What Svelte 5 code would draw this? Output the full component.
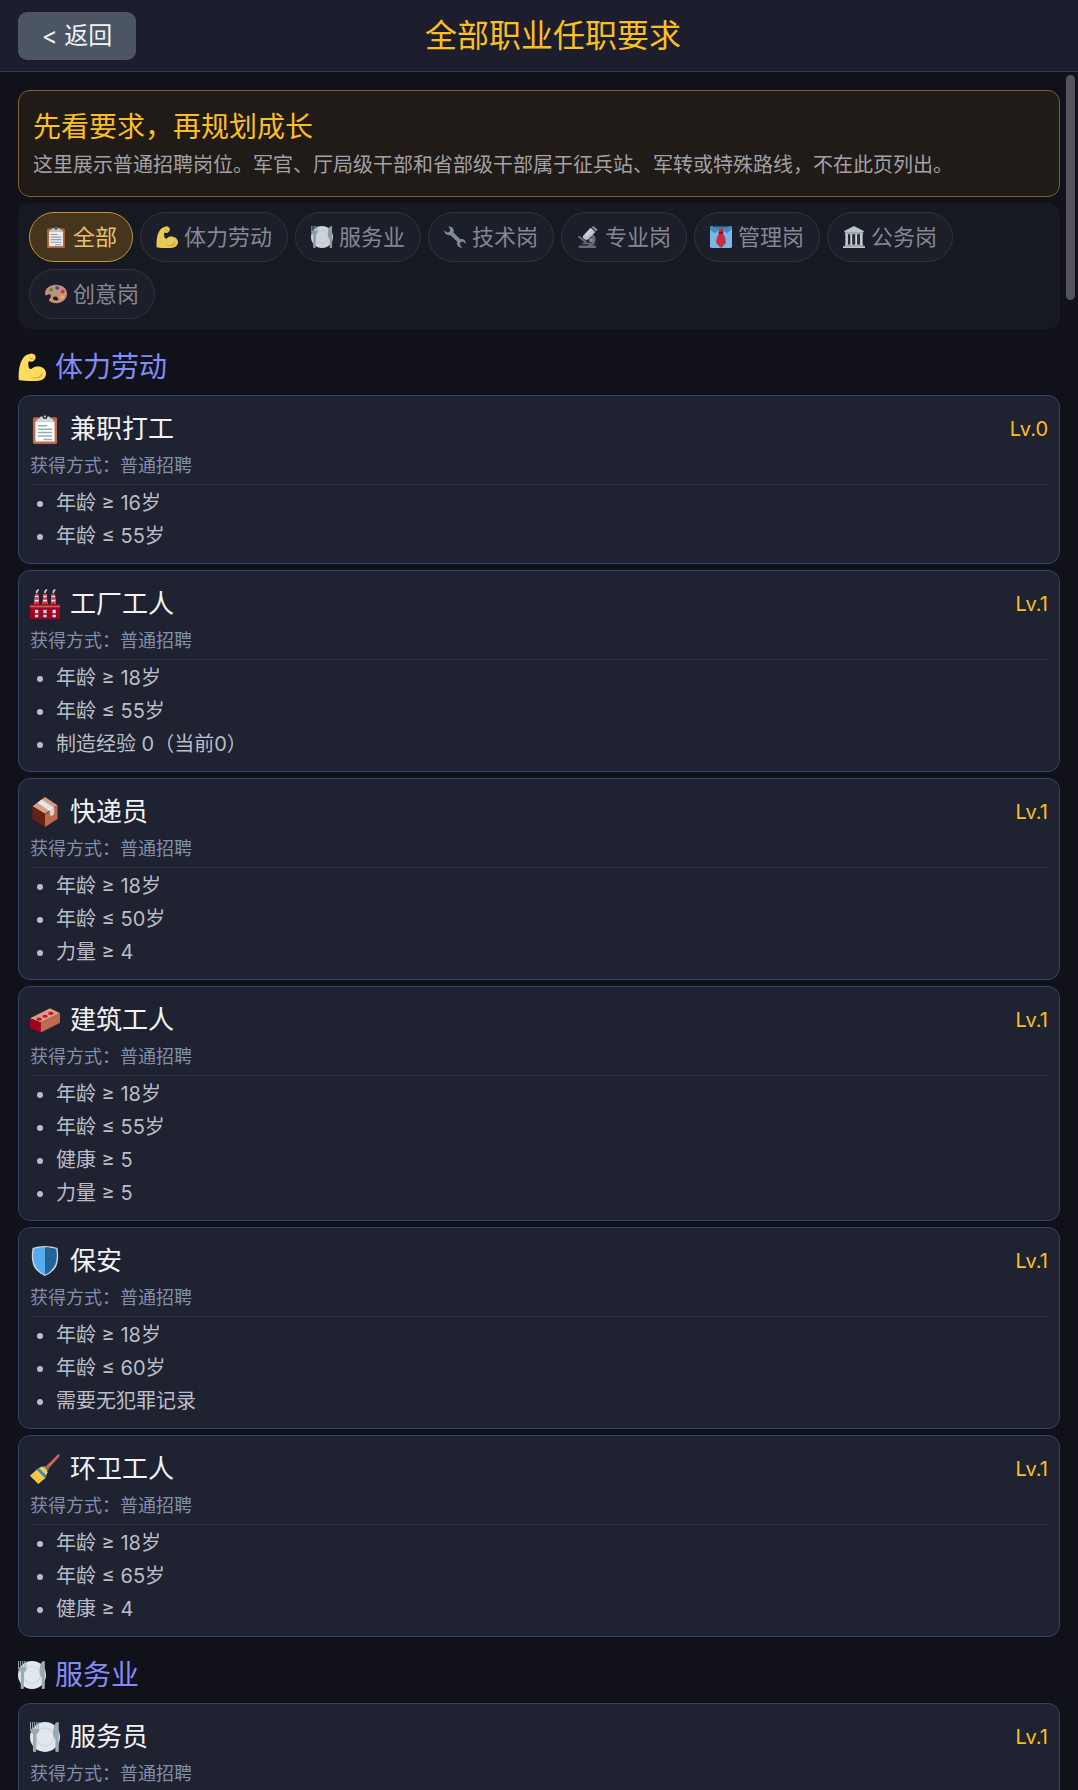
<script>
	const categories = [
		{ id: 'all', icon: 'clipboard', name: '全部' },
		{ id: 'labor', icon: 'biceps', name: '体力劳动' },
		{ id: 'service', icon: 'plate', name: '服务业' },
		{ id: 'tech', icon: 'wrench', name: '技术岗' },
		{ id: 'expert', icon: 'microscope', name: '专业岗' },
		{ id: 'manage', icon: 'tie', name: '管理岗' },
		{ id: 'civil', icon: 'bank', name: '公务岗' },
		{ id: 'creative', icon: 'palette', name: '创意岗' }
	]

	const jobs = [
		{ type: 'labor', icon: 'clipboard', name: '兼职打工', level: 0, needs: ['年龄 ≥ 16岁', '年龄 ≤ 55岁'] },
		{ type: 'labor', icon: 'factory', name: '工厂工人', level: 1, needs: ['年龄 ≥ 18岁', '年龄 ≤ 55岁', '制造经验 0（当前0）'] },
		{ type: 'labor', icon: 'package', name: '快递员', level: 1, needs: ['年龄 ≥ 18岁', '年龄 ≤ 50岁', '力量 ≥ 4'] },
		{ type: 'labor', icon: 'brick', name: '建筑工人', level: 1, needs: ['年龄 ≥ 18岁', '年龄 ≤ 55岁', '健康 ≥ 5', '力量 ≥ 5'] },
		{ type: 'labor', icon: 'shield', name: '保安', level: 1, needs: ['年龄 ≥ 18岁', '年龄 ≤ 60岁', '需要无犯罪记录'] },
		{ type: 'labor', icon: 'broom', name: '环卫工人', level: 1, needs: ['年龄 ≥ 18岁', '年龄 ≤ 65岁', '健康 ≥ 4'] },
		{ type: 'service', icon: 'plate', name: '服务员', level: 1, needs: [] }
	]

	let active = $state('all')

	let sections = $derived(
		categories
			.filter(c => active === 'all' || c.id === active)
			.map(c => ({ ...c, jobs: jobs.filter(j => j.type === c.id) }))
			.filter(c => c.jobs.length)
	)
</script>

{#snippet icon(name)}
	<svg class="icon" viewBox="0 0 36 36" aria-hidden="true"><use href="#i-{name}" /></svg>
{/snippet}

<svg class="sprite" aria-hidden="true">
	<symbol id="i-clipboard" viewBox="0 0 36 36">
		<rect x="3.500" y="4" width="29" height="32" rx="2" fill="#c1694f" />
		<path fill="#fff" d="M6.500 9h23v24h-23z" />
		<path fill="#ccd6dd" d="M13 3h10c1 0 1 3 3 3 1.500 0 2 1 2 2v2H8V8c0-1 .5-2 2-2 2 0 2-3 3-3z" />
		<circle cx="18" cy="3" r="3" fill="#292f33" />
		<circle cx="18" cy="3" r="1.200" fill="#ccd6dd" />
		<path stroke="#99aab5" stroke-width="1.800" stroke-linecap="round" d="M10 14h10M10 18.200h16M10 22.300h16M10 26.500h16M17 30.700h9" />
	</symbol>
	<symbol id="i-biceps" viewBox="0 0 36 36">
		<path fill="#ffdc5d" d="M15.500 1.200c1.200-1 3.500-.8 4.800.4 1.600.4 2.200 1.700 1.900 3 .7 1 .6 2.300-.2 3.200-.8 2-2.600 3.700-4.800 3.600-1.500-.1-2.500-.7-3.400-.8-.8 2.300-.7 5 .2 8.300 1.800 2.200 3 2.200 4.500.8 2.700-2.500 6.700-3 10.500-1.900C33.500 19 36 22.500 36 26.200c0 5.500-4.200 9.400-12 9.700-8.500.3-16.500-.1-23-1.300-.7-10 .5-20.300 4.800-27 2.200-3.500 5.300-6 9.700-6.400z" />
		<path fill="#ef9645" d="M16 29.800c4 2.700 11.500 3 14.200-3.600.8-1 1.900-.3 1.500.8-2.700 6.700-11.300 7.500-15.700 2.800zM14.600 4.500c1.500 2 2.500 2.300 4.600 1.500l-.3 2.300c-2.500.5-4.500-1-4.300-3.800z" />
	</symbol>
	<symbol id="i-plate" viewBox="0 0 36 36">
		<circle cx="18" cy="18" r="18" fill="#e1e8ed" />
		<circle cx="18" cy="18" r="11" fill="#e1e8ed" stroke="#ccd6dd" stroke-width="1.300" />
		<path fill="#99aab5" d="M0 0h1.200v8h1.300V0h1.200v8H5V0h1.200v8h1.300V0h1.300v8H10V0h1v9c0 3-1.500 4.500-3.200 5.200L7.500 35c0 1.300-4 1.300-4 0l.2-20.800C1.500 13.300 0 11 0 8z" />
		<path fill="#99aab5" d="M34.500 1v34c0 1.300-4 1.300-4 0V20.500c-2-1-2.800-3-2.800-6C27.700 7 29.500 0 33.500 0c.7 0 1 .4 1 1z" />
	</symbol>
	<symbol id="i-wrench" viewBox="0 0 36 36">
		<path fill="#8899a6" d="M7.500 1c5-.8 9 3 8.500 8l-.2 2 11 10.500c5-1 9.200 2.700 9.200 7.500l-5-3.500-4 1-1.200 4.200 4 4.800c-5 .7-8.800-3-8.600-7.500l.2-2.500L10.500 15C5 16.200.5 12.500 0 7.500l5.200 3.300 3.800-1 1.200-4.200z" />
	</symbol>
	<symbol id="i-microscope" viewBox="0 0 36 36">
		<path fill="#66757f" d="M3 32h28v4H3zM9 27h13v3H9zM1 18l3-2 12 9-2 3z" />
		<path fill="#66757f" d="M23 12c7 3 10 10 5 18l-4 3h-6l1-3c7-2 8-9 3-13z" />
		<circle cx="23" cy="23" r="3.500" fill="#8899a6" />
		<path fill="#ccd6dd" d="m10 16 12-13 8 7-12 12c-4 2-10-2-8-6z" />
		<path fill="#8899a6" d="m24 2 3-2 7 6-3 3z" />
		<path fill="#e1e8ed" d="m14 14 9-10 3 2-10 11z" />
	</symbol>
	<symbol id="i-tie" viewBox="0 0 36 36">
		<rect width="36" height="36" rx="3" fill="#88c9f9" />
		<path fill="#4598d0" d="M3 0h30c2 0 3 1 3 3v2l-8 7-10-8L8 12 0 6V3c0-2 1-3 3-3z" />
		<path fill="#1c5f8d" d="M5 0h26v2H5z" />
		<path fill="#dd2e44" d="M15 4h6l1 5-1 3c4 6 5 11 5 16l-8 8-8-8c0-5 1-10 5-16l-1-3z" />
		<path fill="#a0041e" d="m14 10 8-1-1 4h-6z" />
	</symbol>
	<symbol id="i-bank" viewBox="0 0 36 36">
		<path fill="#ccd6dd" d="M18 0 34 8v2H2V8z" />
		<path fill="#aab8c2" d="M3 10h30v4H3zM3 30h30v3H3z" />
		<path fill="#ccd6dd" d="M0 33h36v3H0z" />
		<path fill="#292f33" d="M6 14h24v16H6z" />
		<path fill="#e1e8ed" d="M4 13h4v18H4zM12 13h3v18h-3zM20 13h3v18h-3zM28 13h4v18h-4z" />
	</symbol>
	<symbol id="i-palette" viewBox="0 0 36 36">
		<path fill="#d99e82" fill-rule="evenodd" d="M18 3c10 0 18 6 18 14.500S28 33 18.500 33c-5 0-9-1.500-12-4 0-3 4-5 3-9-1-2-3-2-4.500-1-2 1.500-5 2-5-2C0 9 8 3 18 3zm-1 19c-3 0-4 1.500-4 3.500s3 3.500 6 3c3-.4 3-2 2-4-.8-1.600-2-2.500-4-2.500z" />
		<circle cx="10" cy="11" r="3" fill="#5c913b" />
		<circle cx="20" cy="8" r="3.200" fill="#226699" />
		<circle cx="29" cy="14" r="3" fill="#dd2e44" />
		<circle cx="28" cy="23" r="3" fill="#ffcc4d" />
	</symbol>
	<symbol id="i-factory" viewBox="0 0 36 36">
		<path fill="#e1e8ed" d="M6 6h4l1 13H5zM16 6h4l1 13h-6zM26 6h4l1 13h-6z" />
		<path fill="#dd2e44" d="M6 6h4v2H6zM5.600 10h4.700v3H5.500zM5.300 15h5.500v4H5zM16 6h4v2h-4zM15.600 10h4.700v3h-4.800zM15.300 15h5.500v4H15zM26 6h4v2h-4zM25.600 10h4.700v3h-4.800zM25.300 15h5.500v4H25z" />
		<path fill="#ccd6dd" d="M7 4c0-2 1-3 3-4 1 1 1 3-1 3v2H7zM17 4c0-2 1-3 3-4 1 1 1 3-1 3v2h-2zM27 4c0-2 1-3 3-4 1 1 1 3-1 3v2h-2z" />
		<rect y="18" width="36" height="18" rx="1" fill="#a0041e" />
		<path fill="#c1694f" d="M0 20h36v2H0z" />
		<path fill="#bbddf5" d="M6 25h4v4H6zM16 25h4v4h-4zM27 25h4v4h-4zM6 31h4v3H6zM16 31h4v3h-4zM27 31h4v3h-4z" />
	</symbol>
	<symbol id="i-package" viewBox="0 0 36 36">
		<path fill="#d99e82" d="M18 0 33 10 18 20 3 11z" />
		<path fill="#662113" d="m3 11 15 10v15L4 27c-1-.7-1-1-1-2z" />
		<path fill="#c1694f" d="m33 10-15 11v15l14-9c1-.7 1-1 1-2z" />
		<path fill="#e1e8ed" d="m9 7 5-4 15 10-5 4z" />
		<path fill="#ccd6dd" d="m24 17 5-4v7l-3 3-2-1z" />
	</symbol>
	<symbol id="i-brick" viewBox="0 0 36 36">
		<path fill="#d99e82" d="M24 4 36 10 13 21 0 16z" />
		<path fill="#a0041e" d="m0 16 13 5v12L1 28c-1-.5-1-1-1-2z" />
		<path fill="#c1694f" d="m13 21 23-11v10c0 1 0 1-1 2L13 33z" />
		<ellipse cx="11" cy="17" rx="3.300" ry="1.900" fill="#be1931" />
		<ellipse cx="18" cy="13.500" rx="3.300" ry="1.900" fill="#be1931" />
		<ellipse cx="25" cy="10" rx="3.300" ry="1.900" fill="#be1931" />
	</symbol>
	<symbol id="i-shield" viewBox="0 0 36 36">
		<path fill="#ccd6dd" d="M18 0c5 0 11 1 15 2.500 1 6.500 1.500 13.500-1 20.500-2.500 6-8 10.500-14 13C12 33.500 6.500 29 4 23 1.500 16 2 9 3 2.500 7 1 13 0 18 0z" />
		<path fill="#55acee" d="M18 1.500c-5 0-9.500.7-13.500 2-1 6-1 12.500 1 18.500 2.500 5.800 7 10 12.500 12.500z" />
		<path fill="#226699" d="M18 1.500c5 0 9.500.7 13.500 2 1 6 1 12.500-1 18.500-2.500 5.800-7 10-12.500 12.500z" />
	</symbol>
	<symbol id="i-broom" viewBox="0 0 36 36">
		<path fill="#c1694f" d="m34 0 2 2-15 17-3-3z" />
		<path fill="#66757f" d="m18 14 5 4-3 4-6-6z" />
		<path fill="#ffcc4d" d="m9 18 5-3c4 1 6 3 7 7l-3 7-8 7L0 26z" />
		<path fill="#3b88c3" d="m8 19 3-2 9 9-2 3z" />
		<path stroke="#f4900c" d="m3 27 4-4M6 30l4-4M9 33l4-4" />
	</symbol>
</svg>

<div class="page">
	<header class="header">
		<button class="back" type="button">&lt; 返回</button>
		<h1>全部职业任职要求</h1>
		<span class="spacer"></span>
	</header>

	<main class="content">
		<section class="notice">
			<h2>先看要求，再规划成长</h2>
			<p>这里展示普通招聘岗位。军官、厅局级干部和省部级干部属于征兵站、军转或特殊路线，不在此页列出。</p>
		</section>

		<nav class="tabs">
			{#each categories as cat}
				<button
					type="button"
					class="tab"
					class:active={active === cat.id}
					onclick={() => (active = cat.id)}
				>
					{@render icon(cat.icon)}
					<span>{cat.name}</span>
				</button>
			{/each}
		</nav>

		{#each sections as section}
			<h2 class="section-title">
				{@render icon(section.icon)}
				<span>{section.name}</span>
			</h2>
			<div class="jobs">
				{#each section.jobs as job}
					<article class="job">
						<div class="job-head">
							{@render icon(job.icon)}
							<h3>{job.name}</h3>
							<span class="level">Lv.{job.level}</span>
						</div>
						<p class="source">获得方式：普通招聘</p>
						<ul>
							{#each job.needs as need}
								<li>{need}</li>
							{/each}
						</ul>
					</article>
				{/each}
			</div>
		{/each}
	</main>
	<div class="scroll-thumb"></div>
</div>

<style>
:global(body) {
	background: #11111a;
}

h1, h2, h3, p, ul {
	margin: 0;
	padding: 0;
	font-weight: 400;
}

.sprite {
	position: absolute;
	width: 0;
	height: 0;
}

.page {
	position: relative;
	display: flex;
	flex-direction: column;
	height: 100vh;
	overflow: hidden;
	background: #11111a;
	color: #f1f2f6;
	font-family: Inter, "Noto Sans CJK SC", sans-serif;
}

.header {
	display: flex;
	flex-shrink: 0;
	align-items: center;
	justify-content: space-between;
	padding: 12px 18px 11px;
	border-bottom: 1px solid #353b4a;
	background: #1c1e2d;
}

.header h1 {
	font-size: 32px;
	line-height: 44px;
	color: #fbbf24;
}

.back {
	width: 118px;
	height: 48px;
	padding: 0;
	border: 0;
	border-radius: 9px;
	background: #4b5563;
	color: #f1f2f6;
	font-family: inherit;
	font-size: 24px;
	line-height: 46px;
	cursor: pointer;
}

.spacer {
	width: 90px;
}

.content {
	flex: 1;
	min-height: 0;
	padding: 18px;
	overflow-y: auto;
	scrollbar-width: none;
}

.notice {
	padding: 15px 14px 13px;
	border: 1px solid #80612c;
	border-radius: 12px;
	background: #201b16;
}

.notice h2 {
	font-size: 28px;
	line-height: 42px;
	color: #fbbf24;
}

.notice p {
	font-size: 20px;
	line-height: 35px;
	color: #a3a1a8;
}

.icon {
	flex-shrink: 0;
	width: 1em;
	height: 1em;
}

.tabs {
	display: flex;
	flex-wrap: wrap;
	gap: 7px;
	margin-top: 6px;
	padding: 9px 11px 10px;
	border-radius: 12px;
	background: #161920;
}

.tab {
	display: flex;
	align-items: center;
	gap: 6px;
	height: 50px;
	padding: 0 15px;
	border: 1px solid #303243;
	border-radius: 25px;
	background: #1c1e29;
	color: #858792;
	font-family: inherit;
	font-size: 22px;
	line-height: 48px;
	cursor: pointer;
}

.tab .icon {
	opacity: 0.9;
}

.tab.active {
	border-color: #c0943a;
	background: #45351d;
	color: #e9c171;
}

.section-title {
	display: flex;
	align-items: center;
	gap: 9px;
	padding: 22px 0 12px;
	font-size: 28px;
	line-height: 32px;
	color: #818cf8;
}

.jobs {
	display: flex;
	flex-direction: column;
	gap: 6px;
}

.job {
	padding: 12px 11px 10px;
	border: 1px solid #314468;
	border-radius: 12px;
	background: #1f2230;
}

.job-head {
	display: flex;
	align-items: center;
	height: 42px;
	gap: 10px;
}

.job-head .icon {
	width: 30px;
	height: 30px;
}

.job-head h3 {
	flex: 1;
	font-size: 26px;
	line-height: 42px;
}

.level {
	font-size: 20px;
	color: #fbbf24;
}

.source {
	margin-bottom: 2px;
	font-size: 18px;
	line-height: 32px;
	color: #8190aa;
}

ul {
	padding: 2px 0 0 7px;
	border-top: 1px solid #2c2f3d;
	list-style: none;
}

li {
	display: flex;
	align-items: center;
	gap: 13px;
	font-size: 20px;
	line-height: 33px;
	color: #bbbdc8;
}

li::before {
	content: "";
	width: 6px;
	height: 6px;
	border-radius: 50%;
	background: #bbbdc8;
}

.scroll-thumb {
	position: absolute;
	top: 75px;
	right: 3px;
	width: 9px;
	height: 225px;
	border-radius: 5px;
	background: #535359;
}
</style>
